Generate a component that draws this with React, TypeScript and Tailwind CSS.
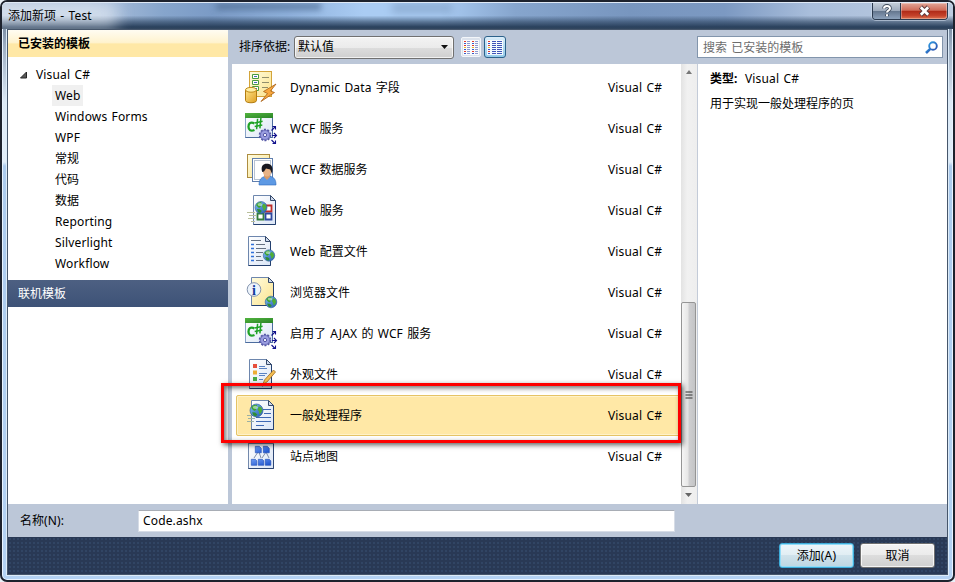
import type { ReactNode } from "react";

/** Mixed-script label: Latin runs get slightly wider word gaps than the CJK ones. */
function Label({ children, className = "" }: { children: string; className?: string }) {
  const runs = children.split(/([\x20-\x7e]+)/).filter(Boolean);
  return (
    <span className={`whitespace-pre ${className}`}>
      {runs.map((run, i) => (
        <span key={i} className={/^[\x20-\x7e]/.test(run) ? "text-[12px] tracking-[0.15px] [word-spacing:1px]" : ""}>
          {run}
        </span>
      ))}
    </span>
  );
}

function Globe({ x, y, r }: { x: number; y: number; r: number }) {
  return (
    <g transform={`translate(${x} ${y}) scale(${r / 6})`}>
      <circle r="6" fill="url(#sea)" stroke="#2c5a94" strokeWidth="0.6" />
      <path d="M-5 -2.6 L-3 -4.8 L0 -5.4 L1 -3.6 L-.6 -2.4 L-.2 -.8 L-2 .4 L-3.4 -.8z" fill="#3fa32f" />
      <path d="M2 -3.8 L4.4 -3 L5.4 0 L4 2.6 L2.6 3.4 L2.2 .8 L1 -.8z" fill="#4fae35" />
      <path d="M-4 1.6 L-1.2 1.8 L.8 3.6 L-.8 5.5 L-3 4.4z" fill="#2f8d35" />
      <ellipse cx="-1" cy="-3" rx="2.4" ry="1.5" fill="#d6f3e6" opacity="0.6" />
    </g>
  );
}

function Sheet({ x, y, w = 23, h = 29, fill = "url(#paper)" }: { x: number; y: number; w?: number; h?: number; fill?: string }) {
  return (
    <g transform={`translate(${x} ${y})`} strokeWidth="1">
      <path d={`M.5 .5H${w - 5.5}L${w - 0.5} 5.5V${h - 0.5}H.5z`} fill={fill} stroke="#6d86ad" />
      <path d={`M${w - 0.5} 5.5V${h - 0.5}H.5`} fill="none" stroke="#24406f" />
      <path d={`M${w - 5.5} .5V5.5H${w - 0.5}z`} fill="#cdd9ec" stroke="#35496b" />
    </g>
  );
}

function ServiceIcon() {
  return (
    <>
      <rect x="0.5" y="1.5" width="27" height="24" fill="url(#paper)" stroke="#8aa4c8" />
      <path d="M27.5 6V25.5H.5" fill="none" stroke="#4c6c9e" />
      <rect x="0" y="1" width="28" height="5" fill="url(#leaf)" />
      <g fill="none" stroke="#1fa326">
        <path d="M9.500 11.400C5.200 9.200 3.500 12 3.500 14.800s1.900 5 6 3.200" strokeWidth="2.300" />
        <path d="M12.600 6.800L11.600 17.200M15.900 6L14.900 16.400" strokeWidth="1.500" />
        <path d="M10 10.900L17.600 9.300M9.700 14.500L17.300 12.900" strokeWidth="1.500" />
      </g>
      <circle cx="20" cy="23" r="5.400" fill="#8f93d6" stroke="#5659a5" strokeWidth="1.700" strokeDasharray="2 1.390" />
      <circle cx="20" cy="23" r="4.500" fill="#9a9de0" stroke="#6265b2" strokeWidth="0.600" />
      <circle cx="20" cy="23" r="1.700" fill="#eeeefa" stroke="#5558a6" />
      <path
        d="M26.500 18.500L30 15M27.500 14.500H30.500V17.500M27 23.500H31M29 21L31.500 23.500L29 26M26.500 28L30 31.500M30.500 28.500V31.500H27.500"
        stroke="#11118c"
        strokeWidth="1.100"
        fill="none"
      />
    </>
  );
}

const icons: Record<string, ReactNode> = {
  field: (
    <>
      <rect x="4.500" y="0.500" width="22" height="25" fill="url(#cream)" stroke="#d3a43a" />
      <g fill="#fff" stroke="#4a9a3e">
        <path d="M7.500 3.500h6v4h-6zM7.500 9.500h6v4h-6zM7.500 15.500h6v4h-6z" />
      </g>
      <path d="M9 5.500h3M9 11.500h3M9 17.500h3" stroke="#4767b7" />
      <path d="M17 6.500h7M17 11.500h7M17 16.500h6" stroke="#918e6c" />
      <path d="M.5 19v10.500c0 3 11 3 11 0V19" fill="url(#gold)" stroke="#b27c12" />
      <ellipse cx="6" cy="18.800" rx="5.500" ry="2.400" fill="#fff0a8" stroke="#c08a18" />
      <path d="M31 13L18.500 20.500L22.500 22.500L16 30.500L29.500 21.500L25.500 20z" fill="#f8a83e" stroke="#a86118" strokeWidth="0.800" />
    </>
  ),
  service: <ServiceIcon />,
  dataService: (
    <>
      <rect x="2.500" y="1.500" width="22" height="23" fill="url(#cream)" stroke="#ad8d40" />
      <rect x="7.500" y="5.500" width="20" height="23" fill="#fff" stroke="#607fae" />
      <rect x="9.500" y="7.500" width="16" height="19" fill="none" stroke="#7186a5" strokeDasharray="1 1" />
      <path d="M14 32c0-6 3-8 6-8.500h6c3 1 5 3 5 8.500z" fill="#5d99e4" stroke="#2e6abc" strokeWidth="0.600" />
      <path d="M19 20h6v4l-3 3-3-3z" fill="#d69a68" />
      <ellipse cx="22" cy="18" rx="4.200" ry="5.600" fill="#e7b386" />
      <path d="M17.200 19c-2-7 2-8.700 5.500-8.200 4.300.5 5.800 4.200 4.300 10.200l-1.800-4.600-4.200-1-2 3z" fill="#181820" />
    </>
  ),
  webService: (
    <>
      <Sheet x={8} y={1} h={30} />
      <path d="M19.500 11.500h7v6h-7z" fill="#fff" stroke="#bd2d29" strokeWidth="1.800" />
      <path d="M12.500 19.500h6v6h-6z" fill="#fff" stroke="#347e3b" strokeWidth="1.800" />
      <path d="M20.500 19.500h6v6h-6z" fill="#fff" stroke="#2d489f" strokeWidth="1.800" />
      <path d="M2 18.500h8M4 21.500h7M3 24.500h7M6 27.500h4" stroke="#b9bf9b" />
      <Globe x={16} y={13.500} r={6} />
    </>
  ),
  config: (
    <>
      <Sheet x={3} y={1} h={30} />
      <path d="M6 9.500h3M6 13.500h3M6 17.500h3M6 21.500h3M6 25.500h3" stroke="#2f70da" strokeWidth="1.300" />
      <path d="M6 5.500h10M11 9.500h9M11 13.500h10M11 17.500h7M11 21.500h5M11 25.500h7" stroke="#647083" />
      <Globe x={24} y={20.500} r={5.700} />
    </>
  ),
  browser: (
    <>
      <Sheet x={6} y={1} h={29} fill="url(#cream)" />
      <circle cx="9" cy="13.500" r="6.800" fill="#edf4fc" stroke="#8494ae" />
      <text x="9" y="18.500" textAnchor="middle" fontFamily="Liberation Serif" fontWeight="700" fontSize="14" fill="#123c9c">
        i
      </text>
      <Globe x={26} y={26} r={5.800} />
    </>
  ),
  skin: (
    <>
      <Sheet x={4} y={1} h={30} />
      <path d="M8 6h4v4h-4z" fill="#e64e3b" />
      <path d="M8 12.500h4v4h-4z" fill="#ecad35" />
      <path d="M8 19h4v4h-4z" fill="#47a944" />
      <path d="M14 8.500h6M14 10.500h8M14 15.500h8M14 17.500h6M14 21.500h4" stroke="#5a82c3" />
      <path d="M28.500 12L19.500 22L18 26L22 24L30.500 14z" fill="#f3bd52" stroke="#9c6b20" strokeWidth="0.800" />
      <path d="M18 26l-1 2 2.500-1" fill="none" stroke="#234" />
    </>
  ),
  handler: (
    <>
      <Sheet x={6} y={1} h={30} />
      <path d="M18 10.500h8M19 14.500h7M11 18.500h15M11 22.500h15M11 26.500h8" stroke="#3f69b4" />
      <path d="M2 16.500h8M3 19.500h7M2 22.500h7" stroke="#9bb0a4" />
      <Globe x={11.500} y={11.500} r={6.500} />
    </>
  ),
  sitemap: (
    <>
      <rect x="3.500" y="3.500" width="25" height="25" fill="url(#paper)" stroke="#7389ac" />
      <path d="M28.500 4v24.500H3.500" fill="none" stroke="#2e4775" />
      <path d="M13 12L9 18M14 12L16 18M21 12L17 18M21 12L24 18" stroke="#7f8da8" fill="none" />
      <g fill="url(#node)" stroke="#1c4ab4" strokeWidth="0.600">
        <path d="M10.300 6.300h4l2 2v4.500h-6zM18.300 6.300h4l2 2v4.500h-6z" />
        <path d="M6.300 19.300h4l1.500 1.500v4.500h-5.500zM13.300 19.300h4l1.500 1.500v4.500h-5.500zM20.300 19.300h4l1.500 1.500v4.500h-5.500z" />
      </g>
    </>
  ),
};

const templates = [
  { icon: "field", name: "Dynamic Data 字段" },
  { icon: "service", name: "WCF 服务" },
  { icon: "dataService", name: "WCF 数据服务" },
  { icon: "webService", name: "Web 服务" },
  { icon: "config", name: "Web 配置文件" },
  { icon: "browser", name: "浏览器文件" },
  { icon: "service", name: "启用了 AJAX 的 WCF 服务" },
  { icon: "skin", name: "外观文件" },
  { icon: "handler", name: "一般处理程序", selected: true },
  { icon: "sitemap", name: "站点地图" },
];

const categories = ["Web", "Windows Forms", "WPF", "常规", "代码", "数据", "Reporting", "Silverlight", "Workflow"];

function Gradients() {
  const defs: [string, string, string][] = [
    ["paper", "#ffffff", "#dbe6f6"],
    ["cream", "#fffce0", "#fbe38c"],
    ["gold", "#ffe48a", "#dfa022"],
    ["leaf", "#52b43f", "#2a8427"],
    ["sea", "#7fc4f2", "#2457b0"],
    ["node", "#6c9af2", "#1a50cc"],
    ["lens", "#2f9ae0", "#2b4fae"],
  ];
  return (
    <svg className="absolute h-0 w-0">
      <defs>
        {defs.map(([id, a, b]) => (
          <linearGradient key={id} id={id} x1="0" y1="0" x2="1" y2="1">
            <stop offset="0" stopColor={a} />
            <stop offset="1" stopColor={b} />
          </linearGradient>
        ))}
      </defs>
    </svg>
  );
}

function TitleBar() {
  return (
    <header className="relative flex h-[27px] shrink-0 justify-between overflow-hidden rounded-t-[5px] border-t border-[#dfe9f6] bg-[linear-gradient(90deg,#b6c6dc_0%,#b0c3dd_9%,#86a5cc_17%,#7b9bc6_22%,#8fb1dc_30%,#aaccf3_38%,#aaccf3_46%,#86a5cd_54%,#7896bf_66%,#7c99c2_76%,#a9bedb_85%,#bdcce0_100%)]">
      <div className="absolute inset-0 bg-[linear-gradient(180deg,transparent_48%,#2d4460a0_72%,#2a415d_92%,#33475f_100%)]" />
      <div className="absolute -left-5 top-0 h-6 w-[135px] bg-[#e6edf5] opacity-65 blur-[8px]" />
      <div className="absolute left-[214px] top-0 h-[7px] w-[105px] bg-[#4b698f] opacity-70 blur-[3px]" />
      <div className="absolute left-[390px] top-0 h-[10px] w-[60px] bg-[#637fa3] opacity-40 blur-[4px]" />
      <Label className="relative pl-1.5 pt-[4px] leading-[18px]">添加新项 - Test</Label>
      <div className="relative mr-[5px] flex h-[17px] rounded-b-[4px] border border-t-0 border-[#2c3b50] shadow-[0_0_0_1px_#d0dceb90]">
        <button className="flex w-[28px] items-center justify-center rounded-bl-[3px] border-r border-[#2c3b50] bg-[linear-gradient(#c4ced9_0%,#9dabbd_48%,#63758d_50%,#8da2bc_100%)]">
          <svg width="12" height="14" viewBox="0 0 12 14" fill="none">
            <path d="M3 4.500C3 1 9 1 9 4.500C9 6.500 6 6.500 6 8.500M6 10.300V12.300" stroke="#3c4757" strokeWidth="3.600" />
            <path d="M3 4.500C3 1 9 1 9 4.500C9 6.500 6 6.500 6 8.500M6 10.300V12.300" stroke="#fff" strokeWidth="2" />
          </svg>
        </button>
        <button className="flex w-[46px] items-center justify-center rounded-br-[3px] bg-[linear-gradient(#e3a698_0%,#cf6b58_46%,#b02a17_50%,#c4412a_78%,#dd7350_100%)] shadow-[inset_0_0_0_1px_#ffffff50]">
          <svg width="13" height="12" viewBox="0 0 13 12" fill="none">
            <path d="M2.500 2L10.500 10M10.500 2L2.500 10" stroke="#5d3a3c" strokeWidth="4.600" />
            <path d="M2.800 2.300L10.200 9.700M10.200 2.300L2.800 9.700" stroke="#fff" strokeWidth="2.700" />
          </svg>
        </button>
      </div>
    </header>
  );
}

function Sidebar() {
  return (
    <aside className="flex w-[220px] shrink-0 flex-col bg-white">
      <div className="flex h-[27px] items-center bg-[linear-gradient(#fffcf2_0%,#fff3cf_46%,#ffe8a6_52%,#ffe8a6_100%)] pl-[10px] font-bold">
        已安装的模板
      </div>
      <div className="mt-[7px] flex h-[21px] items-center pl-3">
        <svg width="8" height="8" viewBox="0 0 8 8" className="mr-2">
          <path d="M6.500 1V7H.5z" fill="#595959" stroke="#262626" />
        </svg>
        <Label>Visual C#</Label>
      </div>
      <ul className="pl-[44px]">
        {categories.map((name, i) => (
          <li key={name} className="flex h-[21px]">
            <span className={`flex items-center pl-[3px] pr-[2px] ${i === 0 ? "bg-[#f0f0f0]" : ""}`}>
              <Label>{name}</Label>
            </span>
          </li>
        ))}
      </ul>
      <div className="mt-[6px] flex h-[27px] items-center bg-[linear-gradient(#4d6082,#3d5277)] pl-[10px] text-white">联机模板</div>
    </aside>
  );
}

function ViewGlyph({ split }: { split?: boolean }) {
  const rows = [1, 3, 5, 7, 9, 11, 13];
  const dots = ["#e23a2e", "#3a59c8", "#e23a2e", "#e5b52c", "#3a59c8", "#e23a2e", "#3a59c8"];
  return (
    <svg width="16" height="15" viewBox="0 0 16 15" shapeRendering="crispEdges">
      <rect x="0" y="0" width="16" height="15" fill="#ffffff" opacity="0.85" />
      {rows.map((y, i) => (
        <g key={y}>
          <rect x="1" y={y} width="2" height="1" fill={dots[i]} />
          {split ? (
            <>
              <path d={`M4 ${y + 0.5}h3M12 ${y + 0.5}h3`} stroke="#8d99cf" />
              <rect x="9" y={y} width="2" height="1" fill={dots[i]} />
            </>
          ) : (
            <path d={`M5 ${y + 0.5}h4M10 ${y + 0.5}h5`} stroke="#3f55b8" />
          )}
        </g>
      ))}
    </svg>
  );
}

function Toolbar() {
  return (
    <div className="flex h-[34px] items-center">
      <div className="flex flex-1 items-center pl-[7px]">
        <Label className="w-[55px]">排序依据:</Label>
        <div className="flex h-[23px] w-[160px] items-center justify-between rounded-[3px] border border-[#707070] bg-[linear-gradient(#f3f3f3_0%,#ebebeb_50%,#dddddd_50%,#cfcfcf_100%)] pl-[3px] pr-[5px] shadow-[inset_0_0_0_1px_#ffffffb0]">
          默认值
          <svg width="7" height="4" viewBox="0 0 7 4">
            <path d="M0 0H7L3.500 4z" fill="#111" />
          </svg>
        </div>
        <div className="ml-[7px] flex h-[20px] w-[20px] items-center justify-center rounded-[2px] border border-[#f3f6fa] bg-[#dbe2ec]">
          <ViewGlyph split />
        </div>
        <div className="ml-[3px] flex h-[22px] w-[22px] items-center justify-center rounded-[3px] border border-[#2c628b] bg-[linear-gradient(#dceefa,#b4dcf3_50%,#94cae9)]">
          <ViewGlyph />
        </div>
      </div>
      <div className="mr-[4px] flex h-[22px] w-[246px] items-center justify-between border border-[#8295ac] bg-white pl-[5px] pr-1 text-[#6d6d6d]">
        <Label className="pt-px">搜索 已安装的模板</Label>
        <svg width="13" height="13" viewBox="0 0 13 13" fill="none" stroke="url(#lens)">
          <circle cx="8" cy="5" r="3.800" strokeWidth="1.900" />
          <path d="M5.200 7.800L1 12" strokeWidth="2.600" />
        </svg>
      </div>
    </div>
  );
}

function ScrollBar() {
  return (
    <div className="flex w-[17px] shrink-0 flex-col items-center border-r border-[#c3cbd8] bg-[linear-gradient(90deg,#e3e3e3,#f1f1f1_40%,#eeeeee)] pr-px">
      <svg width="6" height="4" viewBox="0 0 6 4" className="mt-[6px]">
        <path d="M3 0L6 4H0z" fill="#777" />
      </svg>
      <div className="mt-[228px] flex h-[185px] w-[15px] items-center justify-center rounded-[2px] border border-[#959595] bg-[linear-gradient(90deg,#f5f5f5,#e6e6e6_48%,#cfcfd1_52%,#c3c4c6)]">
        <svg width="8" height="8" viewBox="0 0 8 8">
          <path d="M.5 1H7.500M.5 4H7.500M.5 7H7.500" stroke="#333" />
        </svg>
      </div>
      <svg width="7" height="4" viewBox="0 0 7 4" className="mt-[6px]">
        <path d="M0 0H7L3.500 4z" fill="#666" />
      </svg>
    </div>
  );
}

function TemplateList() {
  return (
    <div className="relative w-[449px] shrink-0 bg-white pl-1 pt-[3px]">
      {templates.map((t) => (
        <div
          key={t.name}
          className={`flex h-[41px] items-center rounded-[2px] border pl-2 ${
            t.selected ? "border-[#e5c365] bg-[#ffe8a6] shadow-[inset_0_0_0_1px_#fff2c8]" : "border-transparent"
          }`}
        >
          <svg width="34" height="33" viewBox="0 0 34 33" className="mr-[11px] shrink-0">
            {icons[t.icon]}
          </svg>
          <Label className="w-[318px]">{t.name}</Label>
          <Label>Visual C#</Label>
        </div>
      ))}
      <div className="absolute -left-[11px] top-[319px] h-[60px] w-[460px] border-[3px] border-[#fe0000] shadow-[2px_2px_5px_#000000a0,inset_2px_2px_5px_#00000090]" />
    </div>
  );
}

export default function App() {
  return (
    <div className="flex h-[582px] w-[955px] flex-col bg-[#eaf1f8] font-['Noto_Sans','Noto_Sans_CJK_SC',sans-serif] text-[12px] leading-[18px] text-black">
      <Gradients />
      <div className="flex flex-1 flex-col rounded-[7px] border-2 border-[#1d222d] bg-[linear-gradient(#b6c6dc_0,#8193a9_28px,#9daec2_44px,#dce9f5_100px,#e2eef9_160px,#accbed_164px,#b4d2f3_100%)] shadow-[inset_0_0_0_1px_#e8f3ff]">
        <TitleBar />
        <div className="mx-[5px] mb-[5px] flex flex-1 flex-col border border-[#46566b] bg-[#bcc7d8] shadow-[0_0_0_1px_#dcebf8]">
          <div className="flex h-[474px] gap-1">
            <Sidebar />
            <main className="flex min-w-0 flex-1 flex-col">
              <Toolbar />
              <div className="flex flex-1">
                <TemplateList />
                <ScrollBar />
                <section className="flex-1 bg-white pl-3 pt-[6px]">
                  <p className="flex leading-[18px]">
                    <Label className="w-[35px] font-bold">类型:</Label>
                    <Label>Visual C#</Label>
                  </p>
                  <p className="mt-[7px] leading-[18px]">用于实现一般处理程序的页</p>
                </section>
              </div>
            </main>
          </div>
          <div className="flex h-[33px] items-center pl-3">
            <Label className="w-[118px]">名称(N):</Label>
            <div className="flex h-[22px] w-[537px] items-center border border-[#d6dce6] border-t-[#a8adb5] bg-white pl-1">
              <Label>Code.ashx</Label>
            </div>
          </div>
          <footer className="flex flex-1 items-start justify-end gap-[6px] bg-[#293955] bg-[radial-gradient(#314564_0.8px,transparent_1px)] bg-[length:4px_4px] pr-[12px] pt-[6px]">
            <button className="flex h-[25px] w-[75px] items-center justify-center rounded-[3px] border border-[#3eaedb] bg-[linear-gradient(#eef6fa_0%,#e0edf3_50%,#cfe2eb_50%,#bed6e2_100%)] shadow-[inset_0_0_0_1px_#93dcf8]">
              <Label>添加(A)</Label>
            </button>
            <button className="flex h-[25px] w-[75px] items-center justify-center rounded-[3px] border border-[#707070] bg-[linear-gradient(#f3f3f3_0%,#ebebeb_50%,#dddddd_50%,#cfcfcf_100%)] shadow-[inset_0_0_0_1px_#ffffffc0]">
              取消
            </button>
          </footer>
        </div>
      </div>
    </div>
  );
}
